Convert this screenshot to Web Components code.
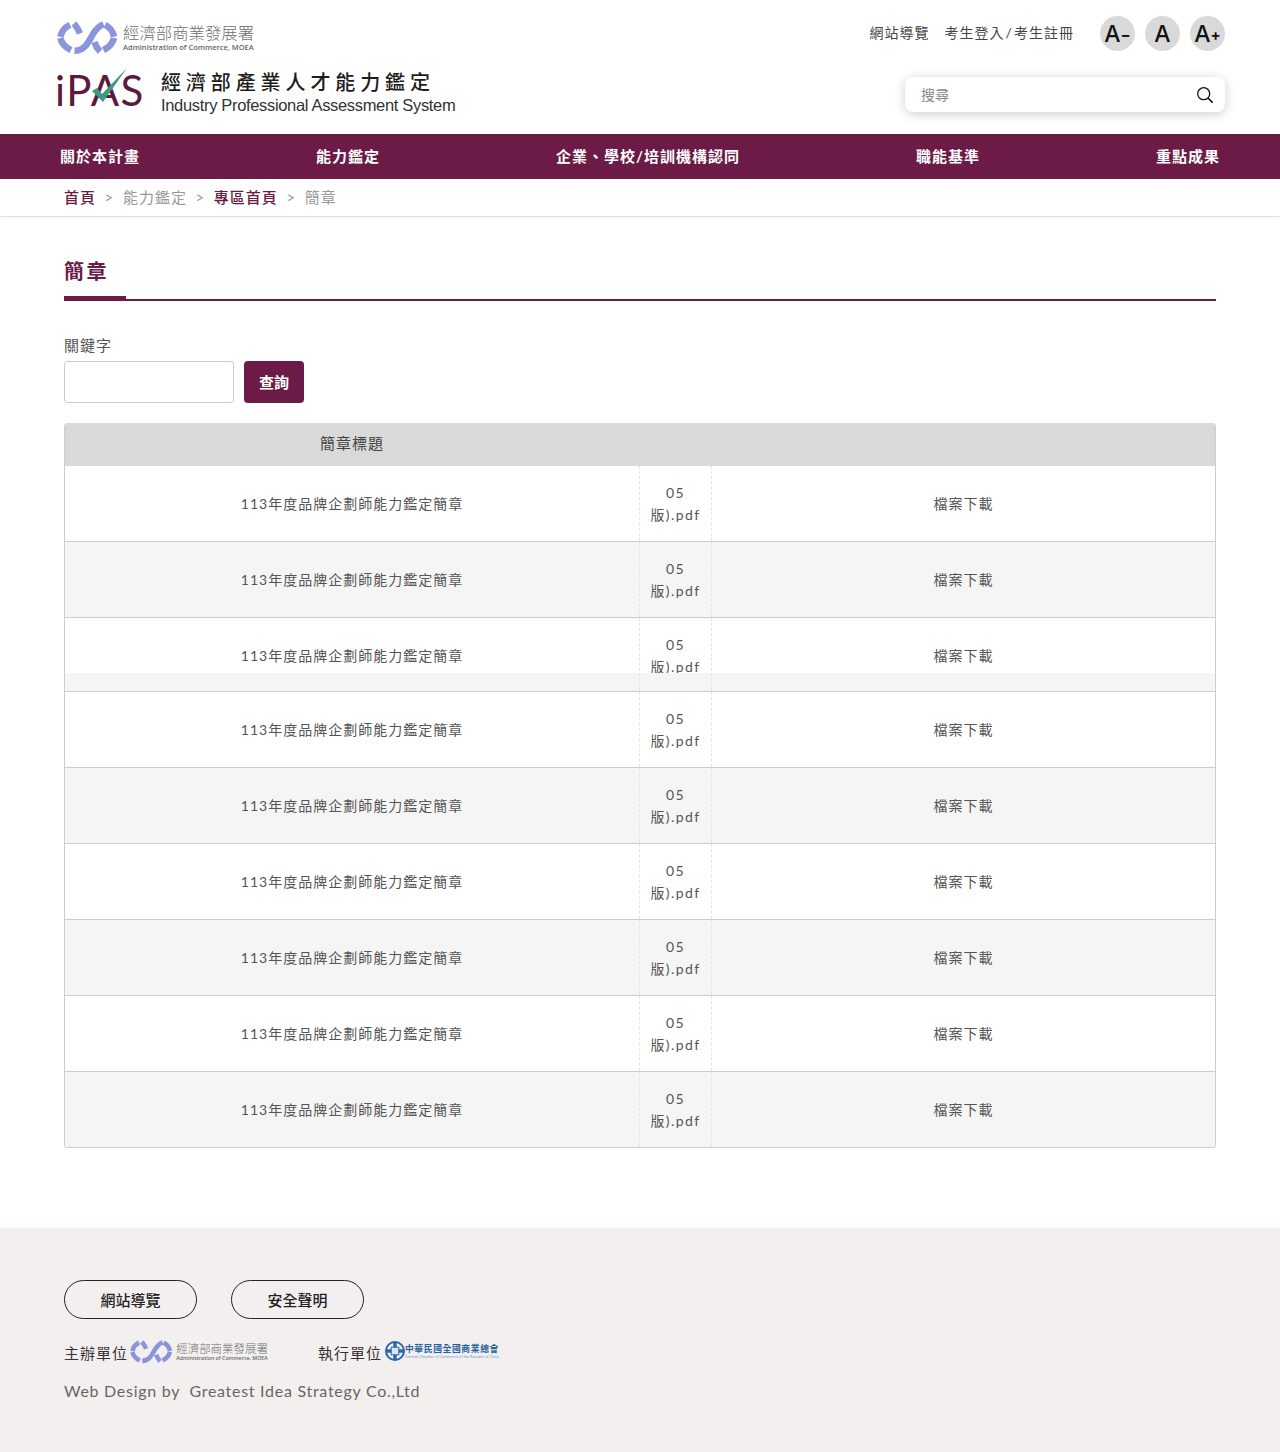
<!DOCTYPE html>
<html lang="zh-Hant">
<head>
<meta charset="utf-8">
<title>簡章</title>
<style>
  html, body { margin: 0; padding: 0; background: #fff; }
  body {
    font-family: "Lato", "Noto Sans CJK TC", sans-serif;
    color: #444;
    --brand: #6b1b45;
  }
</style>
</head>
<body>
<site-header></site-header>
<main-nav>
  <a>關於本計畫</a><a>能力鑑定</a><a>企業、學校/培訓機構認同</a><a>職能基準</a><a>重點成果</a>
</main-nav>
<bread-crumb></bread-crumb>
<page-title>簡章</page-title>
<search-form></search-form>
<brief-table></brief-table>
<site-footer></site-footer>

<script>
// moea logo, used in the header and (smaller) in the footer
class MoeaLogo extends HTMLElement {
  constructor() {
    super();
    this.attachShadow({ mode: "open" });
  }
  connectedCallback() {
    const s = Number(this.getAttribute("scale")) || 1;
    this.shadowRoot.innerHTML = `
      <style>
        :host { display: flex; align-items: flex-start; }
        svg { display: block; flex: none; }
        path { fill: none; stroke: #8b95dc; stroke-width: 6.5; }
        .txt { margin-left: ${6 * s}px; padding-top: ${2 * s}px; white-space: nowrap; }
        .zh { font: 300 ${16.4 * s}px/${19 * s}px "Noto Sans CJK TC", sans-serif; color: #6f6f6f; }
        .en { font: 600 ${7.5 * s}px/${10 * s}px "Open Sans", sans-serif; color: #666; }
      </style>
      <svg width="${60 * s}" height="${33 * s}" viewBox="0 0 60 33">
        <path d="M13 3.8 C8.5 6 4.5 10 3.4 15.8"/>
        <path d="M3.4 17 C4.5 22 8.5 26.5 14 29.2"/>
        <path d="M17 2.5 C19.5 5.5 21.5 8.5 23 12.5" stroke-width="4.5"/>
        <path d="M17.5 29.8 C28 30 32 20 36 13 C39 8 42 5 46.5 3.2" stroke-width="6"/>
        <path d="M48 3.8 C52.5 6 56 10 57 15.8"/>
        <path d="M57 17 C56 22 51.5 26.5 46.5 29.2"/>
        <path d="M37.5 21 C38.5 24.5 40.5 28 43 30.5" stroke-width="4.5"/>
      </svg>
      <div class="txt">
        <div class="zh">經濟部商業發展署</div>
        <div class="en">Administration of Commerce, MOEA</div>
      </div>`;
  }
}

class IpasLogo extends HTMLElement {
  constructor() {
    super();
    this.attachShadow({ mode: "open" });
    this.shadowRoot.innerHTML = `
      <style>
        :host { display: flex; align-items: flex-start; }
        svg { display: block; flex: none; overflow: visible; }
        .mark { font: 400 42px "Lato", sans-serif; fill: #5e1a3c; letter-spacing: 1.4px; }
        .txt { margin-left: 18px; padding-top: 1px; white-space: nowrap; }
        .zh { font: 500 20px/26px "Noto Sans CJK TC", sans-serif; letter-spacing: 4.9px; color: #1d1d1d; }
        .en { font: 400 16.5px/20px "Liberation Sans", sans-serif; letter-spacing: -0.33px; color: #333; }
      </style>
      <svg width="88" height="42" viewBox="0 0 88 42">
        <text class="mark" x="0" y="38">iPAS</text>
        <path d="M37 23 L42 20 L47 26 L72 0 L48 34 Z" fill="#3f9a7c"/>
      </svg>
      <div class="txt">
        <div class="zh">經濟部產業人才能力鑑定</div>
        <div class="en">Industry Professional Assessment System</div>
      </div>`;
  }
}

class SiteHeader extends HTMLElement {
  constructor() {
    super();
    this.attachShadow({ mode: "open" });
    this.shadowRoot.innerHTML = `
      <style>
        :host {
          display: flex;
          justify-content: space-between;
          height: 134px;
          box-sizing: border-box;
          padding: 0 55px 0 55px;
          background: #fff;
        }
        .logos { display: flex; flex-direction: column; padding-top: 21px; gap: 14px; }
        moea-logo { margin-left: 2px; }
        .tools { display: flex; flex-direction: column; align-items: flex-end; padding-top: 16px; gap: 26px; }
        .links { display: flex; align-items: center; height: 35px; font-size: 14px; letter-spacing: 1px; color: #444; }
        .links a { margin-bottom: 4px; }
        .links a + a { margin-left: 15px; word-spacing: -3.5px; }
        .sizes { display: flex; gap: 10px; margin-left: 26px; }
        .sizes span {
          width: 35px;
          height: 35px;
          border-radius: 50%;
          background: #d9d9d9;
          color: #111;
          font: 500 23px/36px "Inter", sans-serif;
          letter-spacing: 0;
          text-align: center;
        }
        .sizes small { font-size: 15px; font-weight: 700; vertical-align: 2px; }
        .search {
          width: 320px;
          height: 35px;
          box-sizing: border-box;
          display: flex;
          align-items: center;
          justify-content: space-between;
          padding: 0 11px 0 16px;
          background: #fff;
          border-radius: 8px;
          box-shadow: 0 2px 12px rgba(0, 0, 0, 0.2);
          font-size: 14px;
          color: #888;
        }
        .search span { padding-bottom: 2px; }
      </style>
      <div class="logos">
        <moea-logo></moea-logo>
        <ipas-logo></ipas-logo>
      </div>
      <div class="tools">
        <div class="links">
          <a>網站導覽</a><a>考生登入 / 考生註冊</a>
          <div class="sizes"><span>A<small>−</small></span><span>A</span><span>A<small>+</small></span></div>
        </div>
        <div class="search">
          <span>搜尋</span>
          <svg width="18" height="18" viewBox="0 0 18 18" fill="none" stroke="#111" stroke-width="1.3">
            <circle cx="7.7" cy="7.7" r="6"/>
            <path d="M12 12 L16.6 16.6" stroke-width="1.7"/>
          </svg>
        </div>
      </div>`;
  }
}

class MainNav extends HTMLElement {
  constructor() {
    super();
    this.attachShadow({ mode: "open" });
    this.shadowRoot.innerHTML = `
      <style>
        :host {
          display: flex;
          align-items: center;
          justify-content: space-between;
          height: 45px;
          box-sizing: border-box;
          padding: 0 60px 2px;
          background: var(--brand);
          color: #fff;
          font-size: 15px;
          font-weight: 700;
          letter-spacing: 1px;
        }
      </style>
      <slot></slot>`;
  }
}

class BreadCrumb extends HTMLElement {
  constructor() {
    super();
    this.attachShadow({ mode: "open" });
    this.shadowRoot.innerHTML = `
      <style>
        :host {
          display: flex;
          align-items: center;
          height: 38px;
          padding: 0 64px 2px;
          border-bottom: 1px solid #e2e2e2;
          box-shadow: 0 1px 3px rgba(0, 0, 0, 0.06);
          box-sizing: border-box;
          font-size: 15px;
          letter-spacing: 1px;
          color: #999;
        }
        b { color: var(--brand); font-weight: 500; }
        i { font-style: normal; margin: 0 8.6px; }
        span { font-weight: 400; }
      </style>
      <b>首頁</b><i>&gt;</i><span>能力鑑定</span><i>&gt;</i><b>專區首頁</b><i>&gt;</i><span>簡章</span>`;
  }
}

class PageTitle extends HTMLElement {
  constructor() {
    super();
    this.attachShadow({ mode: "open" });
    this.shadowRoot.innerHTML = `
      <style>
        :host {
          display: block;
          margin: 36px 64px 0;
          height: 48px;
          box-sizing: border-box;
          border-bottom: 2px solid var(--brand);
          position: relative;
        }
        h1 {
          margin: 0;
          font-size: 20px;
          line-height: 36px;
          letter-spacing: 2.5px;
          font-weight: 700;
          color: var(--brand);
        }
        .tab {
          position: absolute;
          left: 0;
          bottom: -2px;
          width: 62px;
          height: 5px;
          background: var(--brand);
        }
      </style>
      <h1><slot></slot></h1>
      <div class="tab"></div>`;
  }
}

class SearchForm extends HTMLElement {
  constructor() {
    super();
    this.attachShadow({ mode: "open" });
    this.shadowRoot.innerHTML = `
      <style>
        :host { display: block; margin: 33px 64px 20px; }
        label { display: block; font-size: 15px; line-height: 22px; letter-spacing: 1px; color: #555; margin-bottom: 5px; }
        .row { display: flex; gap: 10px; }
        .box {
          width: 170px;
          height: 42px;
          box-sizing: border-box;
          border: 1px solid #ccc;
          border-radius: 3px;
          background: #fff;
        }
        button {
          width: 60px;
          height: 42px;
          border: 0;
          padding: 0 0 2px;
          border-radius: 4px;
          background: var(--brand);
          color: #fff;
          font: 700 15px "Lato", "Noto Sans CJK TC", sans-serif;
        }
      </style>
      <label>關鍵字</label>
      <div class="row"><div class="box"></div><button>查詢</button></div>`;
  }
}

class BriefRow extends HTMLElement {
  constructor() {
    super();
    this.attachShadow({ mode: "open" });
    this.shadowRoot.innerHTML = `
      <style>
        :host {
          display: grid;
          grid-template-columns: 574px 73px 1fr;
          height: 76px;
          box-sizing: border-box;
          border-bottom: 1px solid #ccc;
          background: #fff;
          font-size: 14px;
          letter-spacing: 1px;
          color: #555;
          text-align: center;
        }
        :host([alt]) { background: #f5f5f5; }
        :host([short]) {
          height: 74px;
          grid-template-rows: 73px;
          background: linear-gradient(#fff 55px, #f5f5f5 55px);
        }
        .cell { display: flex; align-items: center; justify-content: center; box-sizing: border-box; }
        .title, .dl { padding-bottom: 2px; }
        .file {
          line-height: 22px;
          letter-spacing: 1.4px;
          border-left: 1px dashed #e4e4e4;
          border-right: 1px dashed #e4e4e4;
          overflow: hidden;
        }
        :host([short]) .file { align-items: flex-start; padding-top: 16px; }
        :host([short]) .clip { height: 39px; overflow: hidden; }
        :host([short]) .title, :host([short]) .dl { height: 75px; }
      </style>
      <div class="cell title"><slot></slot></div>
      <div class="cell file"><div class="clip">05<br>版).pdf</div></div>
      <div class="cell dl">檔案下載</div>`;
  }
}

class BriefTable extends HTMLElement {
  constructor() {
    super();
    this.attachShadow({ mode: "open" });
    this.shadowRoot.innerHTML = `
      <style>
        :host {
          display: block;
          margin: 0 64px;
          border: 1px solid #ccc;
          border-top: 0;
          border-radius: 4px;
          overflow: hidden;
        }
        .head {
          display: grid;
          grid-template-columns: 576px 1fr;
          height: 43px;
          margin: 0 -1px;
          background: #d9d9d9;
          font-size: 15px;
          letter-spacing: 1px;
          line-height: 41px;
          text-align: center;
          color: #444;
        }
        brief-row:last-child { border-bottom: 0; height: 75px; }
      </style>
      <div class="head"><span>簡章標題</span><span></span></div>
      <div id="rows"></div>`;
    const rows = this.shadowRoot.getElementById("rows");
    const kinds = ["", "alt", "short", "", "alt", "", "alt", "", "alt"];
    kinds.forEach((kind) => {
      const row = document.createElement("brief-row");
      if (kind) row.setAttribute(kind, "");
      row.textContent = "113年度品牌企劃師能力鑑定簡章";
      rows.appendChild(row);
    });
  }
}

class SiteFooter extends HTMLElement {
  constructor() {
    super();
    this.attachShadow({ mode: "open" });
    this.shadowRoot.innerHTML = `
      <style>
        :host {
          display: block;
          height: 224px;
          margin-top: 80px;
          box-sizing: border-box;
          padding: 52px 64px 0;
          background: #f3efef;
          color: #333;
        }
        .btns { display: flex; gap: 34px; }
        .btns a {
          width: 133px;
          height: 39px;
          box-sizing: border-box;
          border: 1px solid #222;
          border-radius: 20px;
          text-align: center;
          font-size: 15px;
          font-weight: 500;
          line-height: 39px;
          color: #222;
        }
        .units { display: flex; align-items: center; height: 26px; margin-top: 20px; font-size: 15px; letter-spacing: 1px; }
        .units > span { line-height: 26px; padding-top: 1px; }
        moea-logo { margin-left: 2px; margin-right: 50px; letter-spacing: 0; }
        .cc { display: flex; align-items: center; margin-left: 3px; letter-spacing: 0; margin-top: -2px; }
        .cc svg { display: block; flex: none; }
        .cc .lines { margin-left: 0; white-space: nowrap; }
        .cc .zh { display: block; font: 700 8.8px/11px "Noto Sans CJK TC", sans-serif; letter-spacing: 0.6px; color: #1f5f9e; }
        .cc .en { display: block; font: 400 3.6px/5px "Open Sans", sans-serif; color: #5f8fc4; }
        .credit { margin-top: 15px; font-size: 16px; line-height: 22px; letter-spacing: 0.72px; color: #666; white-space: pre; }
      </style>
      <div class="btns"><a>網站導覽</a><a>安全聲明</a></div>
      <div class="units">
        <span>主辦單位</span>
        <moea-logo scale="0.7"></moea-logo>
        <span>執行單位</span>
        <div class="cc">
          <svg width="20" height="20" viewBox="0 0 20 20">
            <circle cx="10" cy="10" r="9" fill="none" stroke="#2a66a8" stroke-width="2"/>
            <path d="M10 1 V19 M1 10 H19" stroke="#2a66a8" stroke-width="3.4"/>
            <rect x="6.2" y="6.2" width="7.6" height="7.6" fill="#dbe6f2" stroke="#2a66a8" stroke-width="1"/>
          </svg>
          <div class="lines">
            <span class="zh">中華民國全國商業總會</span>
            <span class="en">General Chamber of Commerce of the Republic of China</span>
          </div>
        </div>
      </div>
      <div class="credit">Web Design by  Greatest Idea Strategy Co.,Ltd</div>`;
  }
}

customElements.define("moea-logo", MoeaLogo);
customElements.define("ipas-logo", IpasLogo);
customElements.define("site-header", SiteHeader);
customElements.define("main-nav", MainNav);
customElements.define("bread-crumb", BreadCrumb);
customElements.define("page-title", PageTitle);
customElements.define("search-form", SearchForm);
customElements.define("brief-row", BriefRow);
customElements.define("brief-table", BriefTable);
customElements.define("site-footer", SiteFooter);
</script>
</body>
</html>
